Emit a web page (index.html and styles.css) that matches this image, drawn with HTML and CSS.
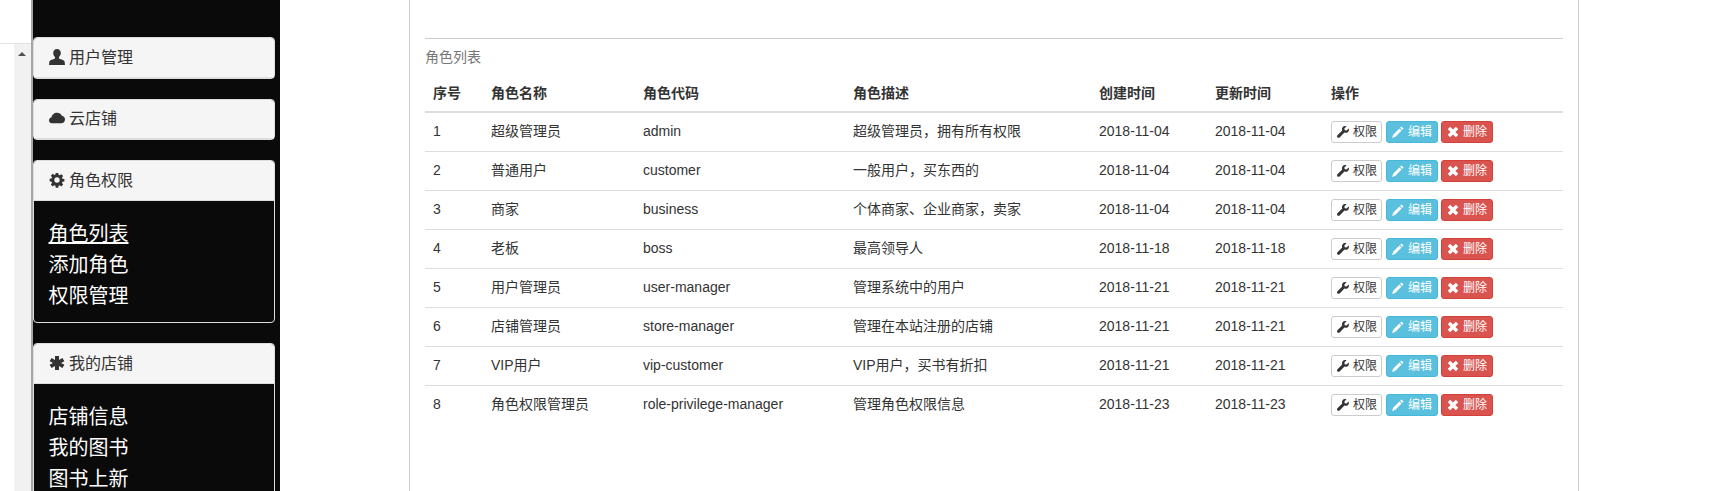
FILE: index.html
```html
<!DOCTYPE html>
<html lang="zh-CN">
<head>
<meta charset="utf-8">
<title>角色列表</title>
<link rel="stylesheet" href="styles.css">
</head>
<body>
<svg class="defs" width="0" height="0" aria-hidden="true">
  <symbol id="i-user" viewBox="0 0 16 16"><path d="M8 0C5.600 0 4.200 1.700 4.200 4c0 1.700.8 3.200 1.800 4.100v1.300C4 10.300.9 11 .4 12.500L0 16h16l-.4-3.500c-.5-1.500-3.600-2.200-5.600-3.100V8.100c1-.9 1.800-2.400 1.800-4.100C11.800 1.700 10.400 0 8 0z"/></symbol>
  <symbol id="i-cloud" viewBox="0 0 16 16"><path d="M2.800 13.300C1.200 13.300 0 12.100 0 10.500c0-1.500 1-2.700 2.300-2.900C2.800 4.800 5.200 2.700 8 2.700c2.200 0 4 1.200 4.900 3.100 1.800.3 3.100 1.800 3.100 3.600 0 2.200-1.700 3.900-3.900 3.900z"/></symbol>
  <symbol id="i-cog" viewBox="-1 -1 18 18"><path fill-rule="evenodd" d="M6.600 0h2.800l.4 2.200 1.200.5 1.900-1.300 2 2-1.300 1.900.5 1.200 2.200.4v2.800l-2.200.4-.5 1.200 1.300 1.900-2 2-1.900-1.300-1.200.5-.4 2.200H6.600l-.4-2.200-1.200-.5-1.900 1.300-2-2 1.300-1.900-.5-1.200L-.3 9.400V6.600l2.200-.4.5-1.200-1.300-1.900 2-2 1.900 1.300 1.200-.5zM8 5a3 3 0 1 0 0 6 3 3 0 0 0 0-6z"/></symbol>
  <symbol id="i-asterisk" viewBox="0 0 16 16"><path d="M6 1h4v4l3.400-2.100 2 3.400L12 8l3.400 1.700-2 3.400L10 11v4H6v-4l-3.400 2.100-2-3.400L4 8 .6 6.300l2-3.400L6 5z"/></symbol>
  <symbol id="i-wrench" viewBox="0 0 16 16"><path d="M15.600 3.200l-2.900 2.900-2.400-.5-.5-2.400L12.700.3C10.800-.4 8.600.1 7.500 1.600 6.500 2.900 6.400 4.500 7 5.900L.6 12.300c-.8.800-.8 2.100 0 2.900.8.800 2.100.8 2.900 0L9.900 8.800c1.400.6 3.100.4 4.400-.6 1.500-1.200 2-3.200 1.300-5z"/></symbol>
  <symbol id="i-pencil" viewBox="0 0 16 16"><path d="M12.600.6l2.800 2.800-1.800 1.800-2.800-2.800zM9.900 3.300l2.800 2.800-8.100 8.100L0 16l1.800-4.600z"/></symbol>
  <symbol id="i-remove" viewBox="0 0 16 16"><path d="M4.200 1L8 4.800 11.800 1 15 4.200 11.200 8l3.800 3.800-3.200 3.200L8 11.200 4.200 15 1 11.800 4.800 8 1 4.200z"/></symbol>
</svg>

<div class="page">
  <div class="gutter"><div class="track"><span class="arrow"></span></div></div>

  <aside class="sidebar">
    <section class="panel">
      <h3 class="panel-heading"><svg class="icon"><use href="#i-user"/></svg>用户管理</h3>
    </section>
    <section class="panel">
      <h3 class="panel-heading"><svg class="icon"><use href="#i-cloud"/></svg>云店铺</h3>
    </section>
    <section class="panel">
      <h3 class="panel-heading"><svg class="icon"><use href="#i-cog"/></svg>角色权限</h3>
      <ul class="panel-body">
        <li><a class="active" href="#">角色列表</a></li>
        <li><a href="#">添加角色</a></li>
        <li><a href="#">权限管理</a></li>
      </ul>
    </section>
    <section class="panel">
      <h3 class="panel-heading"><svg class="icon"><use href="#i-asterisk"/></svg>我的店铺</h3>
      <ul class="panel-body">
        <li><a href="#">店铺信息</a></li>
        <li><a href="#">我的图书</a></li>
        <li><a href="#">图书上新</a></li>
      </ul>
    </section>
  </aside>

  <main class="main">
    <hr class="rule">
    <table class="roles">
      <caption>角色列表</caption>
      <thead>
        <tr><th>序号</th><th>角色名称</th><th>角色代码</th><th>角色描述</th><th>创建时间</th><th>更新时间</th><th>操作</th></tr>
      </thead>
      <tbody>
        <tr><td>1</td><td>超级管理员</td><td>admin</td><td>超级管理员，拥有所有权限</td><td>2018-11-04</td><td>2018-11-04</td>
          <td><div class="actions"><a class="btn btn-default" href="#"><svg class="bi"><use href="#i-wrench"/></svg>权限</a><a class="btn btn-info" href="#"><svg class="bi"><use href="#i-pencil"/></svg>编辑</a><a class="btn btn-danger" href="#"><svg class="bi"><use href="#i-remove"/></svg>删除</a></div></td></tr>
        <tr><td>2</td><td>普通用户</td><td>customer</td><td>一般用户，买东西的</td><td>2018-11-04</td><td>2018-11-04</td>
          <td><div class="actions"><a class="btn btn-default" href="#"><svg class="bi"><use href="#i-wrench"/></svg>权限</a><a class="btn btn-info" href="#"><svg class="bi"><use href="#i-pencil"/></svg>编辑</a><a class="btn btn-danger" href="#"><svg class="bi"><use href="#i-remove"/></svg>删除</a></div></td></tr>
        <tr><td>3</td><td>商家</td><td>business</td><td>个体商家、企业商家，卖家</td><td>2018-11-04</td><td>2018-11-04</td>
          <td><div class="actions"><a class="btn btn-default" href="#"><svg class="bi"><use href="#i-wrench"/></svg>权限</a><a class="btn btn-info" href="#"><svg class="bi"><use href="#i-pencil"/></svg>编辑</a><a class="btn btn-danger" href="#"><svg class="bi"><use href="#i-remove"/></svg>删除</a></div></td></tr>
        <tr><td>4</td><td>老板</td><td>boss</td><td>最高领导人</td><td>2018-11-18</td><td>2018-11-18</td>
          <td><div class="actions"><a class="btn btn-default" href="#"><svg class="bi"><use href="#i-wrench"/></svg>权限</a><a class="btn btn-info" href="#"><svg class="bi"><use href="#i-pencil"/></svg>编辑</a><a class="btn btn-danger" href="#"><svg class="bi"><use href="#i-remove"/></svg>删除</a></div></td></tr>
        <tr><td>5</td><td>用户管理员</td><td>user-manager</td><td>管理系统中的用户</td><td>2018-11-21</td><td>2018-11-21</td>
          <td><div class="actions"><a class="btn btn-default" href="#"><svg class="bi"><use href="#i-wrench"/></svg>权限</a><a class="btn btn-info" href="#"><svg class="bi"><use href="#i-pencil"/></svg>编辑</a><a class="btn btn-danger" href="#"><svg class="bi"><use href="#i-remove"/></svg>删除</a></div></td></tr>
        <tr><td>6</td><td>店铺管理员</td><td>store-manager</td><td>管理在本站注册的店铺</td><td>2018-11-21</td><td>2018-11-21</td>
          <td><div class="actions"><a class="btn btn-default" href="#"><svg class="bi"><use href="#i-wrench"/></svg>权限</a><a class="btn btn-info" href="#"><svg class="bi"><use href="#i-pencil"/></svg>编辑</a><a class="btn btn-danger" href="#"><svg class="bi"><use href="#i-remove"/></svg>删除</a></div></td></tr>
        <tr><td>7</td><td>VIP用户</td><td>vip-customer</td><td>VIP用户，买书有折扣</td><td>2018-11-21</td><td>2018-11-21</td>
          <td><div class="actions"><a class="btn btn-default" href="#"><svg class="bi"><use href="#i-wrench"/></svg>权限</a><a class="btn btn-info" href="#"><svg class="bi"><use href="#i-pencil"/></svg>编辑</a><a class="btn btn-danger" href="#"><svg class="bi"><use href="#i-remove"/></svg>删除</a></div></td></tr>
        <tr><td>8</td><td>角色权限管理员</td><td>role-privilege-manager</td><td>管理角色权限信息</td><td>2018-11-23</td><td>2018-11-23</td>
          <td><div class="actions"><a class="btn btn-default" href="#"><svg class="bi"><use href="#i-wrench"/></svg>权限</a><a class="btn btn-info" href="#"><svg class="bi"><use href="#i-pencil"/></svg>编辑</a><a class="btn btn-danger" href="#"><svg class="bi"><use href="#i-remove"/></svg>删除</a></div></td></tr>
      </tbody>
    </table>
  </main>
</div>
</body>
</html>
```

FILE: styles.css
```css
* { box-sizing: border-box; }

html, body {
  margin: 0;
  height: 100%;
  overflow: hidden;
  background: #fff;
}

body {
  font-family: "Liberation Sans", "Noto Sans CJK SC", sans-serif;
  font-size: 14px;
  line-height: 20px;
  color: #333;
}

.defs { position: absolute; }

.page {
  display: flex;
  height: 491px;
  overflow: hidden;
}

/* left scroll gutter */
.gutter {
  flex: 0 0 33px;
  padding-top: 43px;
  border-right: 2px solid #a6a6a6;
}

.track {
  height: 100%;
  padding: 8px 0 0 14px;
  border-top: 1px solid #e2e2e2;
  background: linear-gradient(to right, #fff 14px, #f1f1f1 14px);
}

.arrow {
  display: block;
  width: 0;
  margin-left: 4px;
  border-left: 4px solid transparent;
  border-right: 4px solid transparent;
  border-bottom: 4px solid #505050;
}

/* sidebar */
.sidebar {
  flex: 0 0 247px;
  padding: 37px 5px 0 0;
  background: #0a0a0a;
}

.panel {
  margin-bottom: 20px;
  border: 1px solid #ddd;
  border-radius: 4px;
}

.panel-heading {
  display: flex;
  align-items: center;
  height: 39.6px;
  margin: 0;
  padding: 1px 15px 0;
  background: #f5f5f5;
  border-bottom: 1px solid #ddd;
  border-radius: 3px 3px 0 0;
  font-size: 16px;
  font-weight: 400;
  color: #333;
}

.panel-body {
  list-style: none;
  margin: 0;
  padding: 18px 15px 10.7px 14.5px;
  font-size: 20px;
  line-height: 31px;
}

.panel-body a {
  color: #fff;
  text-decoration: none;
}

.panel-body a.active { text-decoration: underline; }

.icon {
  flex: none;
  width: 16px;
  height: 16px;
  margin: -2px 4px 0 0;
  fill: #333;
}

/* main */
.main {
  flex: 0 0 1170px;
  margin-left: 129px;
  padding: 38px 15px 0;
  border-left: 1px solid #ccc;
  border-right: 1px solid #ccc;
}

.rule {
  height: 1px;
  margin: 0;
  border: 0;
  background: #ccc;
}

.roles {
  width: 1138px;
  table-layout: fixed;
  border-collapse: separate;
  border-spacing: 0;
}

.roles caption {
  padding: 8px 0;
  text-align: left;
  color: #777;
}

.roles th {
  padding: 8px;
  text-align: left;
  font-weight: 700;
  border-bottom: 2px solid #ddd;
}

.roles td {
  padding: 8px;
  vertical-align: top;
  border-bottom: 1px solid #ddd;
}

.roles tbody tr:last-child td { border-bottom: 0; }

.roles th:nth-child(1) { width: 58px; }
.roles th:nth-child(2) { width: 152px; }
.roles th:nth-child(3) { width: 210px; }
.roles th:nth-child(4) { width: 246px; }
.roles th:nth-child(5) { width: 116px; }
.roles th:nth-child(6) { width: 116px; }

.actions {
  display: flex;
  gap: 3px;
}

.btn {
  display: inline-flex;
  align-items: center;
  width: 52px;
  height: 22px;
  padding-left: 5px;
  border: 1px solid;
  border-radius: 3px;
  font-size: 12px;
  line-height: 18px;
  text-decoration: none;
}

.btn-default { width: 51px; margin-right: 1px; color: #333; background: #fff; border-color: #ccc; }
.btn-info { color: #fff; background: #5bc0de; border-color: #46b8da; }
.btn-danger { color: #fff; background: #d9534f; border-color: #d43f3a; }

.bi {
  flex: none;
  width: 12px;
  height: 12px;
  margin-right: 4px;
  fill: currentColor;
}
```
